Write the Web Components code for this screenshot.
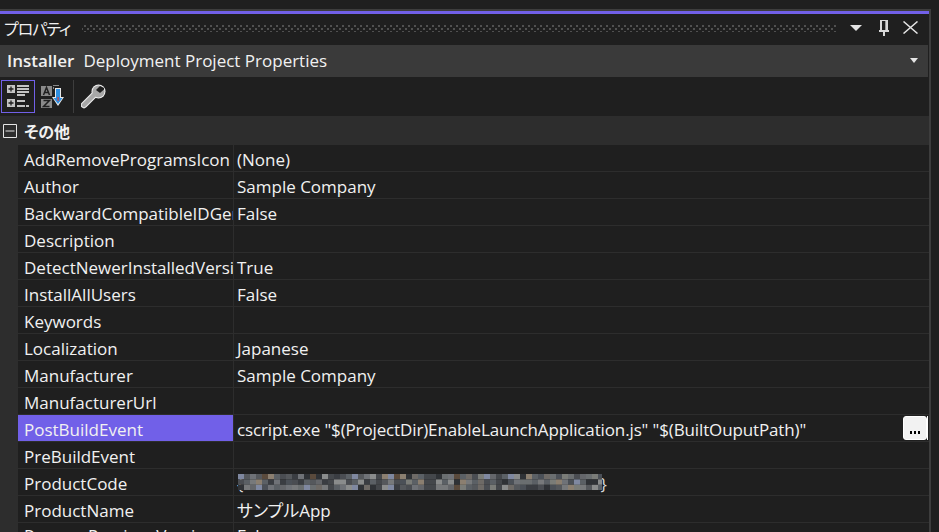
<!DOCTYPE html>
<html>
<head>
<meta charset="utf-8">
<style>
  html, body { margin: 0; height: 100%; background: #1f1f1f; overflow: hidden; }
  body { font-family: "Open Sans", "Noto Sans CJK JP", sans-serif; font-feature-settings: "palt"; }
</style>
</head>
<body>
<prop-window>
  <prop-title slot="title">プロパティ</prop-title>
  <prop-combo slot="combo" name="Installer" type="Deployment Project Properties"></prop-combo>
  <prop-toolbar slot="toolbar"></prop-toolbar>
  <prop-section>その他</prop-section>
  <prop-row name="AddRemoveProgramsIcon" value="(None)"></prop-row>
  <prop-row name="Author" value="Sample Company"></prop-row>
  <prop-row name="BackwardCompatibleIDGeneration" value="False"></prop-row>
  <prop-row name="Description"></prop-row>
  <prop-row name="DetectNewerInstalledVersion" value="True"></prop-row>
  <prop-row name="InstallAllUsers" value="False"></prop-row>
  <prop-row name="Keywords"></prop-row>
  <prop-row name="Localization" value="Japanese"></prop-row>
  <prop-row name="Manufacturer" value="Sample Company"></prop-row>
  <prop-row name="ManufacturerUrl"></prop-row>
  <prop-row name="PostBuildEvent" value='cscript.exe "$(ProjectDir)EnableLaunchApplication.js" "$(BuiltOuputPath)"' selected></prop-row>
  <prop-row name="PreBuildEvent"></prop-row>
  <prop-row name="ProductCode"><prop-mosaic></prop-mosaic></prop-row>
  <prop-row name="ProductName" value="サンプルApp"></prop-row>
  <prop-row name="RemovePreviousVersions" value="False" last></prop-row>
</prop-window>
<script>
//window frame
class PropWindow extends HTMLElement {
  constructor() {
    super();
    this.attachShadow({ mode: 'open' }).innerHTML = `
    <style>
      :host { display: block; height: 532px; box-sizing: border-box; padding-top: 9px; overflow: hidden; color: #f1f1f1; }
      .frame { width: 929px; height: 100%; border-top: 2px solid #3d3d3d; border-right: 2px solid #3d3d3d; }
      .accent { height: 3px; background: #7160e8; }
    </style>
    <div class="frame">
      <div class="accent"></div>
      <slot name="title"></slot>
      <slot name="combo"></slot>
      <slot name="toolbar"></slot>
      <slot></slot>
    </div>`;
  }
}

class PropTitle extends HTMLElement {
  constructor() {
    super();
    this.attachShadow({ mode: 'open' }).innerHTML = `
    <style>
      :host { display: flex; align-items: center; box-sizing: border-box; height: 31px; padding: 0 11px 4px 4px; font-size: 16px; letter-spacing: -1px; color: #f1f1f1; }
      .grip { flex: 1; height: 8px; margin: 0 13px 0 12px;
        background-image: radial-gradient(circle, #505050 1px, transparent 1.1px), radial-gradient(circle, #505050 1px, transparent 1.1px);
        background-size: 6px 6px; background-position: 0 -1px, 3px 2px; }
      svg { display: block; }
    </style>
    <slot></slot>
    <div class="grip"></div>
    <svg width="12" height="6" viewBox="0 0 12 6"><path d="M0 0h12L6 6z" fill="#e4e4e4"/></svg>
    <svg style="margin-left:17px" width="10" height="16" viewBox="0 0 10 16">
      <path d="M1 0h8v10H7V1H3v9H1z M0 10h10v2H0z M4 12h2v4H4z" fill="#d8d8d8"/>
      <path d="M6 1h1v9H6z" fill="#9a9a9a"/>
    </svg>
    <svg style="margin-left:14px" width="15" height="13" viewBox="0 0 15 13" stroke="#e4e4e4" stroke-width="1.5"><path d="M.5.5l14 12M14.500.5L.5 12.500"/></svg>`;
  }
}

class PropCombo extends HTMLElement {
  constructor() {
    super();
    this.attachShadow({ mode: 'open' }).innerHTML = `
    <style>
      :host { display: flex; align-items: center; box-sizing: border-box; height: 32px; margin-right: 1px; padding: 0 10px 2px 7px; background: #3a3a3a; font-size: 17px; color: #f1f1f1; }
      b { font-weight: 600; margin-right: 9px; }
      span { flex: 1; }
    </style>
    <b></b><span></span>
    <svg width="8" height="5" viewBox="0 0 8 5"><path d="M0 0h8L4 5z" fill="#e4e4e4"/></svg>`;
    this.shadowRoot.querySelector('b').textContent = this.getAttribute('name');
    this.shadowRoot.querySelector('span').textContent = this.getAttribute('type');
  }
}

class PropToolbar extends HTMLElement {
  constructor() {
    super();
    this.attachShadow({ mode: 'open' }).innerHTML = `
    <style>
      :host { display: flex; align-items: center; height: 39px; padding-left: 1px; }
      .on { box-sizing: border-box; width: 34px; height: 33px; border: 1px solid #7160e8; }
      .sep { width: 1px; height: 33px; background: #3d3d3d; margin: 0 7px 0 8px; }
      svg { display: block; }
    </style>
    <div class="on">
      <svg width="32" height="31" viewBox="2 81 32 31">
        <g fill="#c4c4c4">
          <path d="M7 85h8v8H7zM7 99h8v8H7z"/>
          <path d="M17 85h12v2H17zM17 88h12v2H17zM17 91h12v2H17zM17 94h8v2h-8zM17 100h8v2h-8zM17 105h8v2h-8zM26 105h3v2h-3z"/>
        </g>
        <path d="M8.500 89h5M11 86.500v5M8.500 103h5M11 100.500v5" stroke="#1f1f1f" stroke-width="1.3"/>
      </svg>
    </div>
    <svg style="margin-left:5px" width="25" height="25" viewBox="40 84 25 25">
      <path d="M41 86h11v10H41zM41 99h11v9H41z" fill="#8a8a8a"/>
      <path d="M43.500 95l3-7.500 3 7.500M44.500 92.500h4M43.500 100.500h6l-6 6h6" fill="none" stroke="#1f1f1f" stroke-width="1.5"/>
      <path d="M53 85h6v1h-6zM53 87h1v2h-1z" fill="#8a8a8a"/>
      <path d="M55 88h6v9h3l-6 9-6-9h3z" fill="#e8e8e8"/>
      <path d="M56 89h4v9h2.500L58 104l-4.500-6H56z" fill="#2f8fe0"/>
      <path d="M57.500 97h1.200v4h-1.200z" fill="#d04040"/>
    </svg>
    <div class="sep"></div>
    <svg width="25" height="25" viewBox="80 84 25 25">
      <path d="M83 105l11-11" stroke="#f0f0f0" stroke-width="6.500" stroke-linecap="round"/>
      <circle cx="97.500" cy="91.500" r="7" fill="#f0f0f0"/>
      <path d="M83 105l11-11" stroke="#a8a8a8" stroke-width="4.500" stroke-linecap="round"/>
      <circle cx="97.500" cy="91.500" r="6" fill="#a8a8a8"/>
      <path d="M95 90l4-4 4 2 0 1.500-4 3.500z" fill="#1f1f1f"/>
    </svg>`;
  }
}

class PropSection extends HTMLElement {
  constructor() {
    super();
    this.attachShadow({ mode: 'open' }).innerHTML = `
    <style>
      :host { display: flex; align-items: center; height: 29px; background: #2d2d2d; font-size: 16px; font-weight: 700; color: #f1f1f1; }
      .toggle { width: 18px; display: flex; margin-right: 6px; padding-left: 3px; box-sizing: border-box; }
      svg { display: block; }
    </style>
    <div class="toggle">
      <svg width="14" height="14" viewBox="0 0 14 14" fill="none" stroke="#e4e4e4"><path d="M.5.5h13v13H.5zM2.500 7h9"/></svg>
    </div>
    <slot></slot>`;
  }
}

class PropRow extends HTMLElement {
  constructor() {
    super();
    this.attachShadow({ mode: 'open' }).innerHTML = `
    <style>
      :host { display: grid; grid-template-columns: 18px 216px 1fr; height: 27px; background: #1f1f1f; font-size: 17px; color: #f1f1f1; }
      .gutter { background: #2d2d2d; }
      .name, .value { box-sizing: border-box; height: 27px; border-bottom: 1px solid #2d2d2d; line-height: 30px; white-space: nowrap; overflow: hidden; }
      .name { padding-left: 6px; border-right: 1px solid #2d2d2d; }
      .value { padding-left: 3px; position: relative; }
      :host([last]) .name, :host([last]) .value { line-height: 26px; }
      :host([selected]) .name { background: #7160e8; }
      :host([selected]) .value span { letter-spacing: -0.13px; }
      .more { position: absolute; right: 2px; top: 1px; width: 24px; height: 24px; box-sizing: border-box; background: #f2f2f2; border-radius: 3px; border: 1px solid #fff; }
      .more i { position: absolute; left: 6px; top: 14px; width: 10px; height: 3px;
        background: repeating-linear-gradient(90deg, #000 0 2px, transparent 2px 4px); }
      .edge { position: absolute; right: 1px; top: 1px; width: 1px; height: 24px; background: #fff; }
    </style>
    <div class="gutter"></div>
    <div class="name"></div>
    <div class="value"><span></span><slot></slot></div>`;
    const root = this.shadowRoot;
    root.querySelector('.name').textContent = this.getAttribute('name');
    root.querySelector('span').textContent = this.getAttribute('value') || '';
    if (this.hasAttribute('selected')) {
      const more = document.createElement('div');
      more.className = 'more';
      more.innerHTML = '<i></i>';
      const edge = document.createElement('div');
      edge.className = 'edge';
      root.querySelector('.value').append(more, edge);
    }
  }
}

// pixelated block that hides the product code, braces stick out at both ends
const TINTS = ['5b6065', '6a6e70', '55585c', '4a4d52', '7a7c78', '6e6a66', '8a8c8c', '4b5057', '3a3d42', '6f7277', '5a4a3c', '77797b', '2f3236', '64666a', '7f88a0', '8b7f70'];
class PropMosaic extends HTMLElement {
  constructor() {
    super();
    const gaps = [92, 139, 189, 259];
    let seed = 17;
    const cells = [];
    for (let r = 0; r < 3; r++) {
      for (let c = 0; c < 61; c++) {
        seed = (seed * 137 + 71) % 1009;
        const x = c * 6;
        const hex = gaps.some((g) => Math.abs(x - g) < 4) ? '44474b' : TINTS[seed % TINTS.length];
        cells.push(`<rect x="${x}" y="${r * 5.4}" width="6" height="5.4" fill="#${hex}"/>`);
      }
    }
    this.attachShadow({ mode: 'open' }).innerHTML = `
    <style>
      :host { display: inline-block; vertical-align: top; line-height: 30px; color: #d8d8d8; }
      svg { position: relative; vertical-align: top; margin: 5px -2px 0 -5px; }
    </style>
    <span>{</span><svg width="364" height="16" viewBox="0 0 364 16">${cells.join('')}</svg><span>}</span>`;
  }
}

customElements.define('prop-window', PropWindow);
customElements.define('prop-title', PropTitle);
customElements.define('prop-combo', PropCombo);
customElements.define('prop-toolbar', PropToolbar);
customElements.define('prop-section', PropSection);
customElements.define('prop-row', PropRow);
customElements.define('prop-mosaic', PropMosaic);
</script>
</body>
</html>
